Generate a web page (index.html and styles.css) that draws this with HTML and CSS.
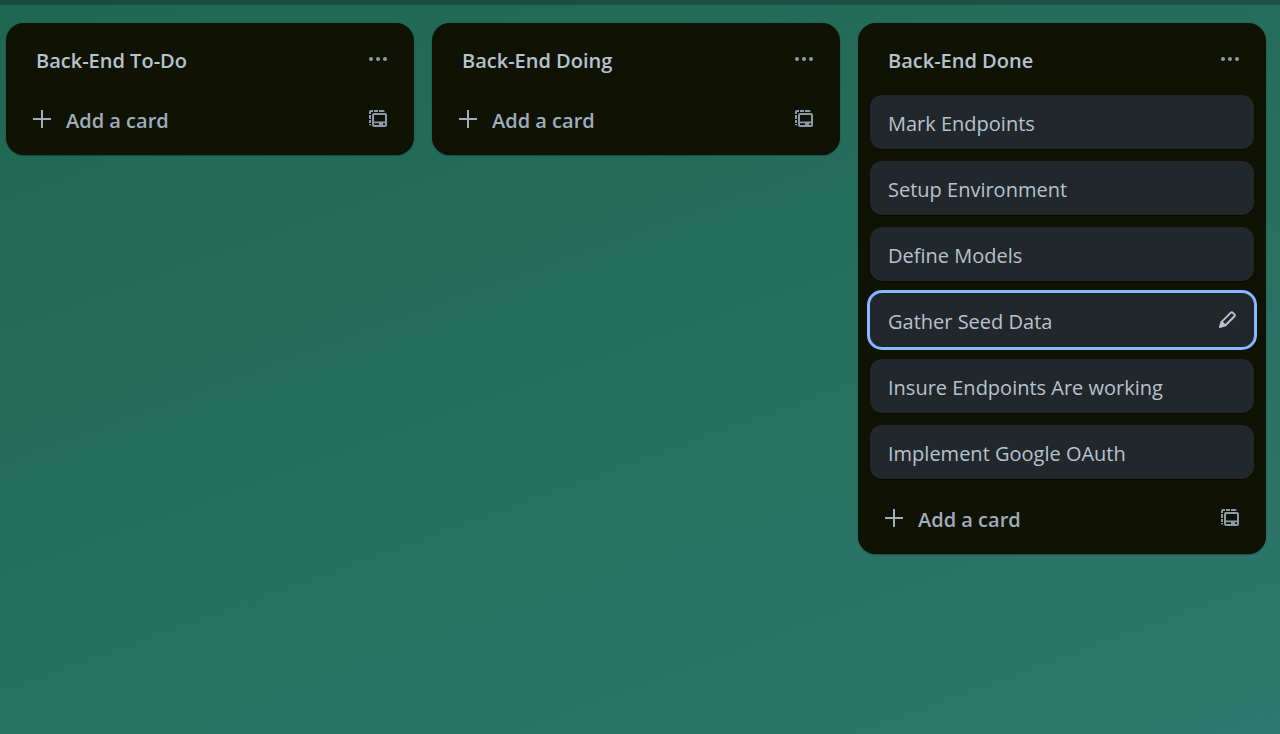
FILE: index.html
```html
<!DOCTYPE html>
<html lang="en">
<head>
<meta charset="utf-8">
<meta name="viewport" content="width=device-width, initial-scale=1">
<title>Board</title>
<link rel="stylesheet" href="styles.css">
</head>
<body>
<svg class="sprite" aria-hidden="true">
  <symbol id="dots" viewBox="0 0 24 24"><circle cx="5" cy="12" r="2"/><circle cx="12" cy="12" r="2"/><circle cx="19" cy="12" r="2"/></symbol>
  <symbol id="plus" viewBox="0 0 24 24"><path d="M11 3h2v8h8v2h-8v8h-2v-8H3v-2h8z"/></symbol>
  <symbol id="template" viewBox="0 0 24 24">
    <path d="M3 7V5a2 2 0 0 1 2-2h2v2H5v2zM8 3h4v2H8zM13 3h4a1.500 1.500 0 0 1 1.500 2H13zM3 8h2v4H3zM3 13h2v3H3zM3 17h2v1.500a1.500 1.500 0 0 1-2-1.500z"/>
    <path fill-rule="evenodd" d="M8 6h11a2 2 0 0 1 2 2v10a2 2 0 0 1-2 2H8a2 2 0 0 1-2-2V8a2 2 0 0 1 2-2zM8 8v6.500h11V8zM8 16.300v1.700h5v-1.700zM17 16.300v1.700h2v-1.700z"/>
  </symbol>
  <symbol id="pencil" viewBox="0 0 24 24"><path fill="none" stroke="currentColor" stroke-width="2" stroke-linejoin="round" d="M6.600 13.900 15.600 4.900a1.700 1.700 0 0 1 2.400 0l1.200 1.200a1.700 1.700 0 0 1 0 2.400L10.200 17.500z"/><path d="M5.600 13.600 10.600 18.300 5 20a1 1 0 0 1-1-1.200z"/></symbol>
</svg>
<header class="topbar"></header>
<main class="board">
  <section class="list">
    <div class="list-header"><h2 class="list-title">Back-End To-Do</h2><button class="icon-button" aria-label="List actions"><svg class="icon"><use href="#dots"/></svg></button></div>
    <div class="list-footer"><button class="add-card"><svg class="icon"><use href="#plus"/></svg><span class="add-label">Add a card</span></button><button class="icon-button" aria-label="Create from template"><svg class="icon"><use href="#template"/></svg></button></div>
  </section>
  <section class="list">
    <div class="list-header"><h2 class="list-title">Back-End Doing</h2><button class="icon-button" aria-label="List actions"><svg class="icon"><use href="#dots"/></svg></button></div>
    <div class="list-footer"><button class="add-card"><svg class="icon"><use href="#plus"/></svg><span class="add-label">Add a card</span></button><button class="icon-button" aria-label="Create from template"><svg class="icon"><use href="#template"/></svg></button></div>
  </section>
  <section class="list">
    <div class="list-header"><h2 class="list-title">Back-End Done</h2><button class="icon-button" aria-label="List actions"><svg class="icon"><use href="#dots"/></svg></button></div>
    <ul class="cards">
      <li class="card"><a class="card-link" href="#">Mark Endpoints</a></li>
      <li class="card"><a class="card-link" href="#">Setup Environment</a></li>
      <li class="card"><a class="card-link" href="#">Define Models</a></li>
      <li class="card card-active"><a class="card-link" href="#">Gather Seed Data</a><button class="edit-button" aria-label="Edit card"><svg class="icon"><use href="#pencil"/></svg></button></li>
      <li class="card"><a class="card-link" href="#">Insure Endpoints Are working</a></li>
      <li class="card"><a class="card-link" href="#">Implement Google OAuth</a></li>
    </ul>
    <div class="list-footer"><button class="add-card"><svg class="icon"><use href="#plus"/></svg><span class="add-label">Add a card</span></button><button class="icon-button" aria-label="Create from template"><svg class="icon"><use href="#template"/></svg></button></div>
  </section>
</main>
</body>
</html>
```
FILE: styles.css
```css
* {
  box-sizing: border-box;
}

body {
  margin: 0;
  min-height: 100vh;
  background: linear-gradient(160deg, #1f674f, #2e776c);
  color: #b6c2cf;
  font-family: "Segoe UI", "Open Sans", "Noto Sans", sans-serif;
  font-size: 20px;
  line-height: 30px;
}

button {
  padding: 0;
  border: 0;
  background: none;
  color: inherit;
  font: inherit;
  cursor: pointer;
}

.sprite {
  display: none;
}

.icon {
  display: block;
  flex: none;
  width: 24px;
  height: 24px;
  fill: currentColor;
}

.topbar {
  height: 5px;
  background: rgba(20, 30, 40, 0.36);
}

.board {
  display: flex;
  align-items: flex-start;
  gap: 18px;
  padding: 18px 14px 18px 6px;
}

.list {
  flex: 1;
  min-width: 0;
  padding: 12px;
  border-radius: 18px;
  background: #101204;
  box-shadow: 0 1px 1px rgba(9, 30, 66, 0.4), 0 0 1px rgba(9, 30, 66, 0.5);
}

.list-header,
.list-footer {
  display: flex;
  align-items: center;
  height: 48px;
}

.list-footer {
  margin-top: 12px;
}

.list-title {
  flex: 1;
  margin: 0;
  padding: 4px 0 0 18px;
  font-size: 20px;
  font-weight: 600;
}

.icon-button {
  display: grid;
  place-items: center;
  width: 48px;
  height: 48px;
  color: #8c9bab;
}

.add-card {
  display: flex;
  flex: 1;
  align-items: center;
  gap: 12px;
  padding-left: 12px;
  color: #9fadbc;
  font-weight: 600;
}

.add-label {
  padding-top: 3px;
}

.cards {
  display: grid;
  gap: 12px;
  margin: 12px 0 0;
  padding: 0 0 3px;
  list-style: none;
}

.card {
  display: flex;
  align-items: center;
  min-height: 54px;
  padding: 0 15px 0 18px;
  border-radius: 12px;
  background: #22272b;
  box-shadow: 0 1px 1px rgba(3, 4, 4, 0.6);
}

.card-active {
  outline: 3px solid #85b8ff;
}

.card-link {
  flex: 1;
  padding-top: 3px;
  color: inherit;
  text-decoration: none;
}

.edit-button {
  color: #b6c2cf;
}
```
